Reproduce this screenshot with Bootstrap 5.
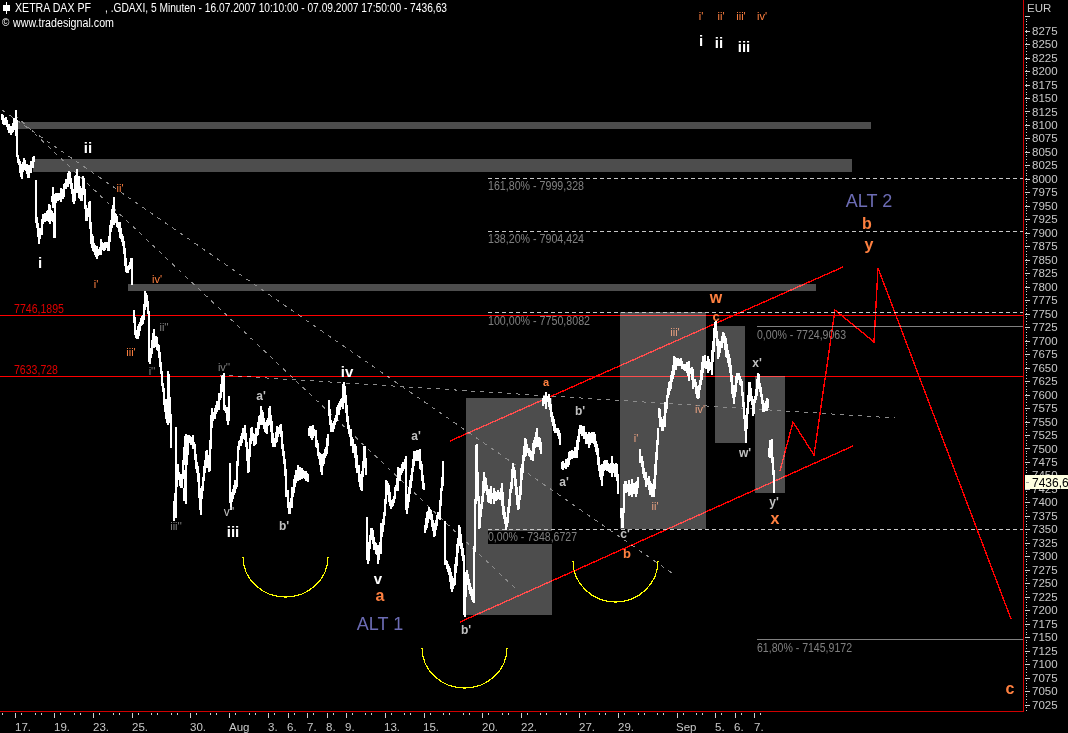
<!DOCTYPE html>
<html lang="de">
<head>
<meta charset="utf-8">
<title>XETRA DAX PF</title>
<link href="https://cdn.jsdelivr.net/npm/bootstrap@5.3.0/dist/css/bootstrap.min.css" rel="stylesheet">
<style>
html,body{background:#000;height:100%}
.chart-frame{width:1068px;height:733px}
.chart-svg{width:1068px;height:733px;font-family:"Liberation Sans",Arial,sans-serif;font-size:11.5px}
.chart-svg line,.chart-svg path,.chart-svg rect,.chart-svg polyline{shape-rendering:crispEdges}
.zone{fill:#4d4d4d}
.red-h{stroke:#f00;stroke-width:1;mix-blend-mode:screen}
.red-t{stroke:#f00;stroke-width:1.4;fill:none;mix-blend-mode:screen}
.trend{stroke:#8c8c8c;stroke-width:1;stroke-dasharray:4 5;fill:none}
.fib-d{stroke:#c8c8c8;stroke-width:1;stroke-dasharray:4 3}
.fib-s{stroke:#808080;stroke-width:1}
.arc-y{stroke:#ff0;stroke-width:1.2;fill:none}
.axis{stroke:#d00000;stroke-width:1}
.tk{stroke:#d0d0d0;stroke-width:1;fill:none}
.t-head{fill:#fff;font-size:12px}
.t-copy{font-size:10px}
.t-axis{fill:#c8c8c8;font-size:11.5px}
.t-fib{fill:#808080;font-size:12px}
.t-red{fill:#e00000;font-size:12px}
.t-w{fill:#fff;font-size:15px;text-anchor:middle;font-weight:700}
.t-o{fill:#ff8040;font-size:16px;text-anchor:middle;font-weight:700}
.t-o.sz11{font-size:11px}
.t-o.sz12{font-size:13px}
.t-o.sz13{font-size:13px}
.t-os{fill:#ff8040;font-size:11px;text-anchor:middle}
.t-ol{fill:#e8a080;font-size:11px;text-anchor:middle}
.t-g{fill:#808080;font-size:11px;text-anchor:middle}
.t-lg{fill:#c0c0c0;font-size:12px;text-anchor:middle;font-weight:700}
.t-lg.thin{font-weight:400}
.t-alt{fill:#6c6cb4;font-size:18px;text-anchor:middle}
.t-tag{fill:#000;font-size:12px}
</style>
</head>
<body class="m-0 overflow-hidden bg-black">
<main class="chart-frame position-relative overflow-hidden bg-black">
<svg class="chart-svg d-block" viewBox="0 0 1068 733" xmlns="http://www.w3.org/2000/svg">
  <!-- zones -->
  <rect class="zone" x="15" y="122" width="856" height="7"/>
  <rect class="zone" x="33" y="159" width="819" height="13"/>
  <rect class="zone" x="128" y="284" width="688" height="7"/>
  <rect class="zone" x="466" y="398" width="86" height="217"/>
  <rect class="zone" x="620" y="312" width="86" height="217"/>
  <rect class="zone" x="715" y="326" width="30" height="117"/>
  <rect class="zone" x="755" y="376" width="30" height="117"/>

  <!-- trend lines -->
  <line class="trend" x1="2" y1="110" x2="672" y2="573"/>
  <line class="trend" x1="15" y1="115" x2="517" y2="590"/>
  <line class="trend" x1="220" y1="375" x2="895" y2="418"/>

  <!-- fibonacci -->
  <line class="fib-d" x1="488" y1="178.500" x2="1023" y2="178.500"/>
  <line class="fib-d" x1="488" y1="231.500" x2="1023" y2="231.500"/>
  <line class="fib-d" x1="488" y1="312.500" x2="1023" y2="312.500"/>
  <line class="fib-d" x1="488" y1="529.500" x2="1023" y2="529.500"/>
  <line class="fib-s" x1="757" y1="326.500" x2="1023" y2="326.500"/>
  <line class="fib-s" x1="757" y1="639.500" x2="1023" y2="639.500"/>

  <!-- price series -->
  <path id="series" fill="none" stroke="#fff" stroke-width="2"/>

  <!-- red levels and channels -->
  <line class="red-h" x1="0" y1="315.500" x2="1023" y2="315.500"/>
  <line class="red-h" x1="0" y1="376.500" x2="1023" y2="376.500"/>
  <line class="red-t" x1="450" y1="441" x2="843" y2="267"/>
  <line class="red-t" x1="460" y1="622" x2="853" y2="446"/>
  <polyline class="red-t" points="780,471 793,422 814,455 835,310 874,342 878,268 1011,619"/>

  <!-- cups -->
  <path class="arc-y" d="M243 557A42.500 40 0 0 0 328 557"/>
  <path class="arc-y" d="M422 648A42.500 40 0 0 0 507 648"/>
  <path class="arc-y" d="M573 561A42.500 41 0 0 0 658 561"/>

  <!-- axis frame -->
  <line class="axis" x1="1023.500" y1="0" x2="1023.500" y2="712"/>
  <line class="axis" x1="0" y1="711.500" x2="1024" y2="711.500"/>
  <line class="tk" x1="1026" y1="16" x2="1026" y2="712" stroke-width="2" stroke-dasharray="1 1.700"/>
  <path id="axis-ticks" class="tk"/>

  <!-- header -->
  <path d="M6.500 2V14" stroke="#fff" fill="none"/>
  <rect x="3" y="5" width="7" height="6" fill="#fff"/>
  <text class="t-head" x="15" y="12" textLength="76" lengthAdjust="spacingAndGlyphs">XETRA DAX PF</text>
  <text class="t-head" x="105" y="12" textLength="342" lengthAdjust="spacingAndGlyphs">, .GDAXI, 5 Minuten - 16.07.2007 10:10:00 - 07.09.2007 17:50:00 - 7436,63</text>
  <text class="t-head t-copy" x="2" y="26">©</text>
  <text class="t-head" x="13" y="27" textLength="101" lengthAdjust="spacingAndGlyphs">www.tradesignal.com</text>
  <text class="t-axis" x="1027" y="12">EUR</text>

  <!-- price axis -->
  <g class="price-labels">
  <text class="t-axis" x="1032" y="34.600">8275</text><text class="t-axis" x="1032" y="48.100">8250</text><text class="t-axis" x="1032" y="61.600">8225</text><text class="t-axis" x="1032" y="75">8200</text><text class="t-axis" x="1032" y="88.500">8175</text><text class="t-axis" x="1032" y="102">8150</text><text class="t-axis" x="1032" y="115.500">8125</text><text class="t-axis" x="1032" y="129">8100</text><text class="t-axis" x="1032" y="142.400">8075</text><text class="t-axis" x="1032" y="155.900">8050</text><text class="t-axis" x="1032" y="169.400">8025</text><text class="t-axis" x="1032" y="182.900">8000</text><text class="t-axis" x="1032" y="196.400">7975</text><text class="t-axis" x="1032" y="209.800">7950</text><text class="t-axis" x="1032" y="223.300">7925</text><text class="t-axis" x="1032" y="236.800">7900</text><text class="t-axis" x="1032" y="250.300">7875</text><text class="t-axis" x="1032" y="263.800">7850</text><text class="t-axis" x="1032" y="277.200">7825</text><text class="t-axis" x="1032" y="290.700">7800</text><text class="t-axis" x="1032" y="304.200">7775</text><text class="t-axis" x="1032" y="317.700">7750</text><text class="t-axis" x="1032" y="331.200">7725</text><text class="t-axis" x="1032" y="344.600">7700</text><text class="t-axis" x="1032" y="358.100">7675</text><text class="t-axis" x="1032" y="371.600">7650</text><text class="t-axis" x="1032" y="385.100">7625</text><text class="t-axis" x="1032" y="398.600">7600</text><text class="t-axis" x="1032" y="412">7575</text><text class="t-axis" x="1032" y="425.500">7550</text><text class="t-axis" x="1032" y="439">7525</text><text class="t-axis" x="1032" y="452.500">7500</text><text class="t-axis" x="1032" y="466">7475</text><text class="t-axis" x="1032" y="479.400">7450</text><text class="t-axis" x="1032" y="492.900">7425</text><text class="t-axis" x="1032" y="506.400">7400</text><text class="t-axis" x="1032" y="519.900">7375</text><text class="t-axis" x="1032" y="533.400">7350</text><text class="t-axis" x="1032" y="546.800">7325</text><text class="t-axis" x="1032" y="560.300">7300</text><text class="t-axis" x="1032" y="573.800">7275</text><text class="t-axis" x="1032" y="587.300">7250</text><text class="t-axis" x="1032" y="600.800">7225</text><text class="t-axis" x="1032" y="614.200">7200</text><text class="t-axis" x="1032" y="627.700">7175</text><text class="t-axis" x="1032" y="641.200">7150</text><text class="t-axis" x="1032" y="654.700">7125</text><text class="t-axis" x="1032" y="668.200">7100</text><text class="t-axis" x="1032" y="681.600">7075</text><text class="t-axis" x="1032" y="695.100">7050</text><text class="t-axis" x="1032" y="708.600">7025</text>
  </g>
  <rect x="1025" y="475" width="43" height="14" fill="#ffffe0"/>
  <path d="M1026 482H1029" stroke="#999" fill="none"/>
  <text class="t-tag" x="1032" y="486.500">7436,63</text>

  <!-- date axis -->
  <g class="date-labels">
  <text class="t-axis" x="15" y="731">17.</text><text class="t-axis" x="54" y="731">19.</text><text class="t-axis" x="93" y="731">23.</text><text class="t-axis" x="132" y="731">25.</text><text class="t-axis" x="190" y="731">30.</text><text class="t-axis" x="229" y="731">Aug</text><text class="t-axis" x="268" y="731">3.</text><text class="t-axis" x="287" y="731">6.</text><text class="t-axis" x="307" y="731">7.</text><text class="t-axis" x="326" y="731">8.</text><text class="t-axis" x="345" y="731">9.</text><text class="t-axis" x="384" y="731">13.</text><text class="t-axis" x="423" y="731">15.</text><text class="t-axis" x="482" y="731">20.</text><text class="t-axis" x="521" y="731">22.</text><text class="t-axis" x="579" y="731">27.</text><text class="t-axis" x="618" y="731">29.</text><text class="t-axis" x="676" y="731">Sep</text><text class="t-axis" x="715" y="731">5.</text><text class="t-axis" x="734" y="731">6.</text><text class="t-axis" x="754" y="731">7.</text>
  </g>

  <!-- level labels -->
  <text class="t-red" x="14" y="313" textLength="50" lengthAdjust="spacingAndGlyphs">7746,1895</text>
  <text class="t-red" x="14" y="374" textLength="44" lengthAdjust="spacingAndGlyphs">7633,728</text>
  <text class="t-fib" x="488" y="190" textLength="96" lengthAdjust="spacingAndGlyphs">161,80% - 7999,328</text>
  <text class="t-fib" x="488" y="243" textLength="96" lengthAdjust="spacingAndGlyphs">138,20% - 7904,424</text>
  <text class="t-fib" x="488" y="325" textLength="102" lengthAdjust="spacingAndGlyphs">100,00% - 7750,8082</text>
  <rect x="488" y="531" width="90" height="13" fill="#000"/>
  <text class="t-fib" x="488" y="541" textLength="89" lengthAdjust="spacingAndGlyphs">0,00% - 7348,6727</text>
  <text class="t-fib" x="757" y="339" textLength="89" lengthAdjust="spacingAndGlyphs">0,00% - 7724,9063</text>
  <text class="t-fib" x="757" y="652" textLength="95" lengthAdjust="spacingAndGlyphs">61,80% - 7145,9172</text>

  <!-- wave counts, top legend -->
  <text class="t-os" x="701" y="20">i'</text><text class="t-os" x="721" y="20">ii'</text><text class="t-os" x="741" y="20">iii'</text><text class="t-os" x="762" y="20">iv'</text>
  <text class="t-w" x="701" y="46">i</text><text class="t-w" x="719" y="48">ii</text><text class="t-w" x="744" y="52">iii</text>

  <!-- wave counts, chart -->
  <text class="t-w" x="88" y="153">ii</text><text class="t-w" x="40" y="268">i</text><text class="t-w" x="233" y="537">iii</text><text class="t-w" x="347" y="377">iv</text><text class="t-w" x="378" y="584">v</text>
  <text class="t-o" x="380" y="601">a</text><text class="t-o sz12" x="627" y="558">b</text><text class="t-o sz11" x="546" y="386">a</text><text class="t-o sz13" x="716" y="321">c</text><text class="t-o" x="716" y="303">w</text><text class="t-o" x="867" y="229">b</text><text class="t-o" x="869" y="250">y</text><text class="t-o" x="775" y="524">x</text><text class="t-o" x="1010" y="694">c</text>
  <text class="t-alt" x="380" y="630">ALT 1</text><text class="t-alt" x="869" y="207">ALT 2</text>
  <text class="t-os" x="120" y="192">ii'</text><text class="t-os" x="96" y="288">i'</text><text class="t-os" x="131" y="356">iii'</text><text class="t-os" x="157" y="283">iv'</text>
  <text class="t-g" x="164" y="331">ii''</text><text class="t-g" x="152" y="375">i''</text><text class="t-g" x="176" y="530">iii''</text><text class="t-g" x="224" y="371">iv''</text><text class="t-lg thin" x="229" y="516">v''</text>
  <text class="t-lg" x="261" y="400">a'</text><text class="t-lg" x="284" y="530">b'</text><text class="t-lg" x="416" y="440">a'</text><text class="t-lg" x="466" y="634">b'</text><text class="t-lg" x="564" y="486">a'</text><text class="t-lg" x="580" y="415">b'</text><text class="t-lg" x="625" y="538">c'</text><text class="t-lg" x="745" y="457">w'</text><text class="t-lg" x="757" y="367">x'</text><text class="t-lg" x="774" y="506">y'</text>
  <text class="t-ol" x="636" y="442">i'</text><text class="t-ol" x="655" y="510">ii'</text><text class="t-ol" x="675" y="336">iii'</text><text class="t-ol" x="700" y="413">iv'</text>
</svg>
</main>
<script>
(function(){
  var segs=[
   [[0,117],[5,122],[10,133],[13,120],[15,125],[16,135],[16,157],[20,173],[23,165],[27,172],[33,157]],
   [[34,183],[35,220],[38,240],[42,217],[48,214],[52,217],[53,233],[50,200],[58,197],[62,193],[68,173],[72,200],[75,177],[80,200],[82,180],[85,217],[88,208],[90,240],[97,255],[100,245],[107,247],[112,208],[115,220],[122,240],[125,270],[130,263],[128,283]],
   [[132,313],[135,337],[142,317],[144,292],[147,310],[148,360],[152,337],[157,347],[160,373],[163,400],[166,417],[167,380],[170,443]],
   [[174,430],[172,517],[176,470],[180,487],[184,440],[182,500],[187,437],[193,447],[197,480],[199,507],[205,453],[208,470]],
   [[208,465],[210,420],[217,403],[222,377],[223,407],[227,420],[228,397]],
   [[229,463],[229,503],[235,483],[237,450],[243,427],[247,467],[250,430],[253,443],[260,413],[265,430],[268,413],[272,443],[279,428],[283,460],[285,490],[288,510],[295,473],[307,477]],
   [[307,433],[313,430],[320,467],[327,440]],
   [[327,403],[330,430],[337,410],[343,390],[347,430],[353,450],[360,487],[363,450],[365,473]],
   [[366,517],[366,560],[370,533],[377,557],[383,513],[385,482],[390,507],[397,477],[405,460],[405,510],[413,457],[418,455],[423,490]],
   [[423,530],[428,510],[433,530],[438,513],[442,467]],
   [[443,523],[444,560],[452,587],[458,530],[462,560],[463,615],[465,573],[472,600],[475,450],[478,527],[483,477],[487,497],[500,493],[505,528],[512,467],[517,507],[523,447],[530,457],[535,437],[540,450]],
   [[541,403],[547,398],[552,423],[559,440]],
   [[560,467],[575,450],[579,427],[587,440],[593,437],[600,477],[603,463],[615,470],[617,490]],
   [[619,510],[621,528],[623,487],[635,490],[637,477]],
   [[638,453],[645,480],[652,493],[657,433]],
   [[657,410],[661,427],[667,393],[673,363],[680,363],[690,373],[697,395],[702,360],[710,367],[714,327],[717,353],[722,337],[728,363],[732,397],[737,373],[740,383],[745,440]],
   [[745,425],[748,387],[752,410],[757,378],[762,410],[767,403]],
   [[767,453],[770,443],[773,492]]
  ];
  var s=12345;
  function rnd(){s=(s*1103515+12345)&0x7fffffff;return s/0x7fffffff;}
  var d='';
  segs.forEach(function(pts){
    var prev=pts[0][1];
    for(var i=1;i<pts.length;i++){
      var a=pts[i-1],b=pts[i],n=Math.max(1,Math.round(b[0]-a[0]));
      if(b[0]===a[0]){d+='M'+(a[0]+.5)+' '+Math.min(a[1],b[1])+'V'+Math.max(a[1],b[1]);prev=b[1];continue;}
      for(var k=1;k<=n;k++){
        var c=a[1]+(b[1]-a[1])*k/n+(rnd()-.5)*6,r=1.5+rnd()*3+(rnd()>.85?rnd()*6:0),x=a[0]+k;
        d+='M'+(x+.5)+' '+(Math.min(prev,c)-r).toFixed(1)+'V'+(Math.max(prev,c)+r).toFixed(1);
        prev=c;
      }
    }
  });
  document.getElementById('series').setAttribute('d',d);

  var t='';
  for(var p=0;p<=50;p++){var y=Math.round(30.6+13.48*p)+.5;t+='M1025 '+y+'H1029.500';}
  t+='M1025 16.500H1030';
  var labelled={0:1,2:1,4:1,6:1,9:1,11:1,13:1,14:1,15:1,16:1,17:1,19:1,21:1,24:1,26:1,29:1,31:1,34:1,36:1,37:1,38:1};
  t+='M2.500 713V715';
  for(var q=0;q<=38;q++){
    var tx=Math.round(15.3+19.45*q)+.5;
    t+='M'+tx+' 713V'+(labelled[q]?718:715);
    t+='M'+(tx+6)+' 713V715';
  }
  document.getElementById('axis-ticks').setAttribute('d',t);
})();
</script>
<script src="https://cdn.jsdelivr.net/npm/bootstrap@5.3.0/dist/js/bootstrap.bundle.min.js"></script>
</body>
</html>
